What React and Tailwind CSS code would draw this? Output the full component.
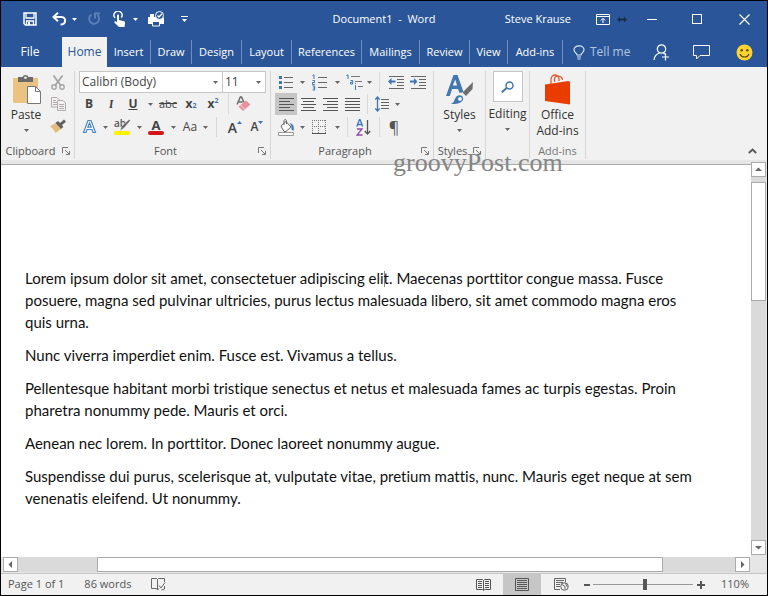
import { useState } from 'react';

const TABS = [
  { label: 'Insert', width: 'w-11' },
  { label: 'Draw', width: 'w-[41px]' },
  { label: 'Design', width: 'w-[50px]' },
  { label: 'Layout', width: 'w-[50px]' },
  { label: 'References', width: 'w-[70px]' },
  { label: 'Mailings', width: 'w-[58px]' },
  { label: 'Review', width: 'w-[50px]' },
  { label: 'View', width: 'w-[38px]' },
  { label: 'Add-ins', width: 'w-[55px]' },
];

const PARAGRAPHS = [
  'Maecenas porttitor congue massa. Fusce posuere, magna sed pulvinar ultricies, purus lectus malesuada libero, sit amet commodo magna eros quis urna.',
  'Nunc viverra imperdiet enim. Fusce est. Vivamus a tellus.',
  'Pellentesque habitant morbi tristique senectus et netus et malesuada fames ac turpis egestas. Proin pharetra nonummy pede. Mauris et orci.',
  'Aenean nec lorem. In porttitor. Donec laoreet nonummy augue.',
  'Suspendisse dui purus, scelerisque at, vulputate vitae, pretium mattis, nunc. Mauris eget neque at sem venenatis eleifend. Ut nonummy.',
];

const Caret = ({ className = 'text-[#666]' }) => (
  <svg width="5" height="3" viewBox="0 0 5 3" className={className} aria-hidden="true">
    <path d="M0 0h5L2.5 3z" fill="currentColor" />
  </svg>
);

const Tool = ({ label, width = 'w-[22px]', active, children }) => (
  <button
    type="button"
    aria-label={label}
    className={`flex h-[22px] shrink-0 items-center justify-center ${width} ${active ? 'bg-[#c6c6c6]' : ''}`}
  >
    {children}
  </button>
);

const Divider = ({ width = 'w-3' }) => (
  <div className={`flex h-5 shrink-0 justify-center ${width}`}>
    <div className="w-px bg-[#d8d8d8]" />
  </div>
);

const Launcher = ({ label }) => (
  <button type="button" aria-label={label} className="flex h-4 w-3 items-center justify-center">
    <svg width="8" height="8" viewBox="0 0 8 8" fill="none" stroke="#777" aria-hidden="true">
      <path d="M.5 6V.5H6M3 3l4 4M7.5 4v3.5H4" />
    </svg>
  </button>
);

const Group = ({ label, launcher, width, muted, children }) => (
  <section
    aria-label={label || 'Editing'}
    className={`mt-1 mb-px flex shrink-0 flex-col border-r border-[#d5d5d5] ${width}`}
  >
    <div className="flex-1">{children}</div>
    <div className={`flex h-4 items-center ${launcher ? 'pr-0.5' : ''} ${muted ? 'text-[#777]' : 'text-[#555]'}`}>
      <span className="flex-1 text-center">{label}</span>
      {launcher && <Launcher label={`${label} settings`} />}
    </div>
  </section>
);

const Lines = ({ rows }) => (
  <svg width="15" height="13" viewBox="0 0 15 13" stroke="#555" aria-hidden="true">
    {rows.map(([x1, x2], i) => (
      <path key={i} d={`M${x1} ${i * 3 + 0.5}H${x2}`} />
    ))}
  </svg>
);

const SaveIcon = () => (
  <svg width="14" height="14" viewBox="0 0 14 14" aria-hidden="true">
    <path d="M1 1h12v12H2.500L1 11.500z" fill="none" stroke="#fff" strokeWidth="1.500" />
    <path d="M3 1v5h8V1M3.500 13V9h7v4" fill="none" stroke="#fff" strokeWidth="1.300" />
    <path d="M5 10h2v3H5z" fill="#fff" />
  </svg>
);

const UndoIcon = () => (
  <svg width="15" height="14" viewBox="0 0 15 14" fill="none" stroke="#fff" strokeWidth="2" aria-hidden="true">
    <path d="M6 .8 1.500 5 6 9.200M2 5h7.500c5 0 5 7.500-1 7.500" />
  </svg>
);

const RedoIcon = () => (
  <svg width="14" height="14" viewBox="0 0 14 14" fill="none" stroke="#5b7fb8" strokeWidth="2" aria-hidden="true">
    <path d="M4.500 2.500A5 5 0 1 0 10.500 3M8 6.500V1.500h5" />
  </svg>
);

const TouchIcon = () => (
  <svg width="13" height="16" viewBox="0 0 13 16" aria-hidden="true">
    <path d="M2.200 7A4 4 0 1 1 8.300 6.500" fill="none" stroke="#fff" strokeWidth="1.400" />
    <path d="M4 4.500c0-1.500 2-1.500 2 0V9l5 1.200c1 .3 1.200 1 1 2L11.500 16H6l-4.500-4.300c-.6-.9.600-1.700 1.300-1.200L4 11.200z" fill="#fff" />
  </svg>
);

const PrintIcon = () => (
  <svg width="17" height="16" viewBox="0 0 17 16" aria-hidden="true">
    <path d="M0 6h2V3h4v3h9l1 1v6H0z" fill="#fff" />
    <path d="M4.500 10.500h7v4.500h-7z" fill="#2a5699" stroke="#fff" />
    <circle cx="11.500" cy="4.500" r="4" fill="#2a5699" stroke="#fff" />
    <path d="m9.500 4.500 1.500 1.500 3-3.200" fill="none" stroke="#fff" strokeWidth="1.300" />
  </svg>
);

const RibbonDisplayIcon = () => (
  <svg width="14" height="11" viewBox="0 0 14 11" fill="none" stroke="#fff" aria-hidden="true">
    <path d="M.5.5h13v10H.5zM.5 2.500h13M7 9V4.500M4.800 6.500 7 4.300l2.200 2.200" />
  </svg>
);

const PasteIcon = () => (
  <svg width="30" height="31" viewBox="0 0 30 31" aria-hidden="true">
    <rect x="0" y="4" width="25" height="25" rx="1" fill="#eac282" />
    <path d="M5 3h4.500a3.200 3.200 0 0 1 6 0H20v5H5z" fill="#6a6a6a" />
    <circle cx="12.500" cy="3.800" r="1.300" fill="#f1f1f1" />
    <path d="M14.500 12.500h8l5 5v12h-13z" fill="#fff" stroke="#777" />
    <path d="M22.500 12.500v5h5" fill="none" stroke="#777" />
  </svg>
);

const ScissorsIcon = () => (
  <svg width="14" height="15" viewBox="0 0 14 15" fill="none" stroke="#a5a5a5" aria-hidden="true">
    <path d="m2.500.5 7 9.500M11.500.5l-7 9.500" strokeWidth="1.800" />
    <circle cx="3" cy="12" r="2.200" strokeWidth="1.400" />
    <circle cx="11" cy="12" r="2.200" strokeWidth="1.400" />
  </svg>
);

const CopyIcon = () => (
  <svg width="15" height="14" viewBox="0 0 15 14" fill="#f1f1f1" stroke="#b5a9b0" aria-hidden="true">
    <path d="M.5.5H6L8.500 3v7H.5zM2 3.500h3M2 5.500h4M2 7.500h4" />
    <path d="M6.500 3.500H12l2.500 2.500v7.500h-8zM8 7.500h5M8 9.500h5M8 11.500h5" />
  </svg>
);

const PainterIcon = () => (
  <svg width="16" height="14" viewBox="0 0 16 14" aria-hidden="true">
    <path d="M0 7.500 5.500 4l5.500 6-5.500 4C4.500 11.500 2.500 9 0 7.500z" fill="#e5bb7c" />
    <path d="m5.500 4 2.500-2 2 2L14 .5l2 2.300L12 6l1.300 2-2.300 2z" fill="#606060" />
  </svg>
);

const EraserIcon = () => (
  <svg width="15" height="16" viewBox="0 0 15 16" aria-hidden="true">
    <path d="M1 8.500 4.300 1h1.200L8 6.500M2.500 6h4" fill="none" stroke="#666" strokeWidth="1.400" />
    <path d="m2.500 10.500 7.500-6 4.500 4-7.500 6.500z" fill="#e8909e" />
    <path d="m4.500 9 4.300 4.300" stroke="#f7d5da" />
  </svg>
);

const HighlightIcon = () => (
  <svg width="17" height="17" viewBox="0 0 17 17" className="overflow-visible" aria-hidden="true">
    <text x="0" y="8" fontSize="10" fontWeight="600" fontFamily="Open Sans, sans-serif" fill="#555">ab</text>
    <path d="m16.500 1.500-6.500 7.500-4 3 1.500-4.500L15 .5z" fill="#666" stroke="#f1f1f1" strokeWidth=".5" />
    <rect y="12" width="16" height="4" rx="1" fill="#fff200" />
  </svg>
);

const BulletsIcon = () => (
  <svg width="14" height="15" viewBox="0 0 14 15" aria-hidden="true">
    <path d="M5 2.500h9M5 7.500h9M5 12.500h9" stroke="#666" />
    <path d="M0 1h3v3H0zM0 6h3v3H0zM0 11h3v3H0z" fill="#3f76b5" />
  </svg>
);

const NumberingIcon = () => (
  <svg width="15" height="17" viewBox="0 0 15 17" aria-hidden="true">
    <path d="M6 3.500h9M6 8.500h9M6 13.500h9" stroke="#666" />
    <g fill="none" stroke="#3f76b5">
      <path d="M.5 1.500 2 .8V5M.5 6.500h2v2h-2v2h2.300M.5 12h2.200v4H.5M1 14h1.500" />
    </g>
  </svg>
);

const MultilevelIcon = () => (
  <svg width="17" height="17" viewBox="0 0 17 17" fill="none" aria-hidden="true">
    <path d="M5 2.500h9M9 7.500h7M12 12.500h5" stroke="#777" />
    <path d="M.5 1.500 2 .8V5M4.500 6.500h2.200V10H4.500V8.300h2M9.500 11v5M9.500 9v1" stroke="#3f76b5" />
  </svg>
);

const IndentIcon = ({ flip }) => (
  <svg width="17" height="14" viewBox="0 0 17 14" aria-hidden="true">
    <path d="M1 1.500h15M9 4.500h7M9 7.500h7M9 10.500h7M1 13.500h15" stroke="#666" />
    <path d={flip ? 'M7.500 6.500 4 3v2.500H0v2h4V10z' : 'M0 6.500 3.500 3v2.500h4v2h-4V10z'} fill="#3f76b5" />
  </svg>
);

const SpacingIcon = () => (
  <svg width="15" height="16" viewBox="0 0 15 16" fill="none" aria-hidden="true">
    <path d="M6 3.500h8M6 6.500h8M6 9.500h8M6 12.500h8" stroke="#666" />
    <path d="M2.500 1v14M.3 3.500 2.500 1l2.200 2.500M.3 12.500 2.500 15l2.200-2.500" stroke="#3f76b5" strokeWidth="1.300" />
  </svg>
);

const ShadingIcon = () => (
  <svg width="17" height="17" viewBox="0 0 17 17" aria-hidden="true">
    <path d="m3 7 5-4.500L13 8l-5 4.500H6z" fill="#fff" stroke="#666" />
    <path d="M6 6V2c0-2 2.500-2 2.500 0v3" fill="none" stroke="#666" />
    <path d="M12 4c3 1 4.500 3 3.500 8l-2-1.500V8z" fill="#3f76b5" />
    <path d="M.5 13.500h15v3H.5z" fill="#fff" stroke="#999" />
  </svg>
);

const BordersIcon = () => (
  <svg width="14" height="14" viewBox="0 0 14 14" aria-hidden="true">
    <path d="M0 .5h14M0 6.500h14M.5 0v14M6.500 0v14M13.500 0v14" stroke="#777" strokeDasharray="1 1" />
    <path d="M0 13.500h14" stroke="#555" />
  </svg>
);

const SortIcon = () => (
  <svg width="15" height="17" viewBox="0 0 15 17" fill="none" aria-hidden="true">
    <path d="M.8 7.500 3.500.5h.5l2.700 7M1.800 5.500h4" stroke="#3f76b5" strokeWidth="1.300" />
    <path d="M1 10h5l-5 6h5.500" stroke="#8a4aa8" strokeWidth="1.300" />
    <path d="M11.500 1v14M8.800 12l2.700 3 2.700-3" stroke="#555" strokeWidth="1.300" />
  </svg>
);

const StylesIcon = () => (
  <svg width="30" height="31" viewBox="0 0 30 31" aria-hidden="true">
    <path d="M1 22 8.500 1h4l6 17-4 1-1.500-4H7l-2.200 7zM7.800 11.500h4.300L10.200 5.500z" fill="#4377b0" fillRule="evenodd" />
    <path d="m28 8-.5 7-6.500 7-3.500-3.500z" fill="#6e6e6e" />
    <path d="M5 30c4 0 4-4 6-7 2-2.500 6-2.500 7 .5 1.500 5-6 7-13 6.500z" fill="#4377b0" />
    <circle cx="15" cy="25" r="2" fill="#f1f1f1" />
  </svg>
);

const SearchIcon = () => (
  <svg width="13" height="12" viewBox="0 0 13 12" fill="none" stroke="#4377b0" aria-hidden="true">
    <circle cx="8.500" cy="4.500" r="3.500" strokeWidth="1.500" />
    <path d="M5.700 7 .8 11.300" strokeWidth="2" />
  </svg>
);

const StoreIcon = () => (
  <svg width="26" height="31" viewBox="0 0 26 31" aria-hidden="true">
    <path d="M6 10V6c0-7 8-6 8-1v2M9.500 8V5c0-4 7.500-4 8 1" fill="none" stroke="#e25a35" strokeWidth="1.300" />
    <path d="M0 10.500 23.500 7l1.500 1v22.500L0 27z" fill="#eb3c00" />
  </svg>
);

const BulbIcon = () => (
  <svg width="12" height="15" viewBox="0 0 12 15" fill="none" stroke="#dbe5f3" strokeWidth="1.200" aria-hidden="true">
    <path d="M4 10C4 8 1 7.500 1 4.800 1 2.500 3.200.8 6 .8s5 1.700 5 4C11 7.500 8 8 8 10zM4 12h4M4.500 14h3" />
  </svg>
);

const ShareIcon = () => (
  <svg width="17" height="17" viewBox="0 0 17 17" fill="none" stroke="#fff" strokeWidth="1.200" aria-hidden="true">
    <circle cx="8.500" cy="5" r="4.200" />
    <path d="M1 16c.3-4 2.500-6 5.500-7M10.500 9l1.500 1M12.500 9.500v7M9 13h7" />
  </svg>
);

const CommentIcon = () => (
  <svg width="17" height="15" viewBox="0 0 17 15" fill="none" stroke="#fff" aria-hidden="true">
    <path d="M.5.5h16v10H7l-3.500 3.500v-3.500h-3z" />
  </svg>
);

const SmileyIcon = () => (
  <svg width="17" height="17" viewBox="0 0 17 17" aria-hidden="true">
    <circle cx="8.500" cy="8.500" r="8" fill="#fdd32f" />
    <circle cx="5.700" cy="6.300" r="1.200" fill="#5b4a14" />
    <circle cx="11.300" cy="6.300" r="1.200" fill="#5b4a14" />
    <path d="M4 10c1.500 4 7.500 4 9 0" fill="none" stroke="#5b4a14" strokeWidth="1.200" />
  </svg>
);

const ProofIcon = () => (
  <svg width="15" height="13" viewBox="0 0 15 13" fill="none" stroke="#666" aria-hidden="true">
    <path d="M6.500 12V1.500L5.500.5h-5v10h5zM6.500 1.500l1-1h6V4M6.500 12l1.500-1.500M8 7.500l2 2.500 4-5.500M10.500 12l3-1V8" />
  </svg>
);

const ReadIcon = () => (
  <svg width="15" height="12" viewBox="0 0 15 12" fill="none" stroke="#555" aria-hidden="true">
    <path d="M7.500 11.500 6.500 10.500h-6V.5h6l1 1 1-1h6v10h-6zM7.500 1v10M2 2.500h4M2 4.500h4M2 6.500h4M2 8.500h4M9 2.500h4M9 4.500h4M9 6.500h4M9 8.500h4" />
  </svg>
);

const PrintLayoutIcon = () => (
  <svg width="14" height="13" viewBox="0 0 14 13" fill="none" stroke="#555" aria-hidden="true">
    <path d="M.5.5h13v12H.5zM2 2.500h10M2 4.500h10M2 6.500h10M2 8.500h10M2 10.500h10" />
  </svg>
);

const WebLayoutIcon = () => (
  <svg width="15" height="13" viewBox="0 0 15 13" fill="none" stroke="#666" aria-hidden="true">
    <path d="M6 11.500H.5V.5h11V4M2 2.500h8M2 4.500h7M2 6.500h4M2 8.500h4" />
    <circle cx="10.500" cy="8.500" r="3.800" />
    <path d="m8 6.500 3 2v3M11 5l2.500 4" />
  </svg>
);

const TitleBar = () => (
  <header className="grid h-9 grid-cols-[1fr_auto_1fr] items-center text-[11px] text-white">
    <div className="flex items-center pl-[22px]">
      <button type="button" aria-label="Save"><SaveIcon /></button>
      <button type="button" aria-label="Undo" className="ml-[15px] flex items-center gap-[5px]">
        <UndoIcon />
        <Caret className="text-white" />
      </button>
      <button type="button" aria-label="Redo" className="ml-2.5"><RedoIcon /></button>
      <button type="button" aria-label="Touch mode" className="ml-3 flex items-center gap-[7px]">
        <TouchIcon />
        <Caret className="text-white" />
      </button>
      <button type="button" aria-label="Print preview" className="ml-2.5"><PrintIcon /></button>
      <button type="button" aria-label="Customize toolbar" className="ml-4 flex flex-col items-center gap-0.5">
        <span className="h-px w-[7px] bg-white" />
        <Caret className="text-white" />
      </button>
    </div>
    <h1 className="whitespace-pre">Document1  -  Word</h1>
    <div className="flex items-center justify-end pr-[3px]">
      <span className="mr-5">Steve Krause</span>
      <button type="button" aria-label="Ribbon display options" className="flex w-6 justify-center">
        <RibbonDisplayIcon />
      </button>
      <svg width="15" height="7" viewBox="0 0 15 7" className="mr-1" aria-hidden="true">
        <path d="M2 3.500 5 .5v2h4v-2l3 3-3 3v-2H5v2z" fill="#1b2b45" />
      </svg>
      <button type="button" aria-label="Minimize" className="flex h-8 w-9 items-center justify-center">
        <span className="h-px w-2.5 bg-white" />
      </button>
      <button type="button" aria-label="Maximize" className="flex h-8 w-[54px] items-center justify-center">
        <span className="h-2.5 w-2.5 border border-white" />
      </button>
      <button type="button" aria-label="Close" className="flex h-8 w-10 items-center justify-center">
        <svg width="11" height="11" viewBox="0 0 11 11" stroke="#fff" strokeWidth="1.200" aria-hidden="true">
          <path d="m.5.5 10 10M10.500.5l-10 10" />
        </svg>
      </button>
    </div>
  </header>
);

const TabBar = () => (
  <nav className="flex h-[30px] items-center text-[12px] text-white">
    <button type="button" className="w-[58px] shrink-0">File</button>
    <button type="button" className="ml-[3px] h-[30px] w-[45px] shrink-0 bg-[#f1f1f1] text-[#2a5699]">Home</button>
    {TABS.map((tab) => (
      <button key={tab.label} type="button" className={`h-6 shrink-0 border-r border-[#6f8fc0] text-[11px] ${tab.width}`}>
        {tab.label}
      </button>
    ))}
    <label className="ml-2.5 flex min-w-0 flex-1 items-center gap-[5px]">
      <BulbIcon />
      <input
        type="text"
        aria-label="Tell me"
        placeholder="Tell me"
        className="w-12 min-w-0 bg-transparent outline-none placeholder:text-[#b4c6e2] placeholder:opacity-100"
      />
    </label>
    <button type="button" aria-label="Share" className="flex w-10 shrink-0 justify-center"><ShareIcon /></button>
    <button type="button" aria-label="Comments" className="flex w-10 shrink-0 justify-center"><CommentIcon /></button>
    <button type="button" aria-label="Feedback" className="flex w-[46px] shrink-0 justify-center"><SmileyIcon /></button>
  </nav>
);

const ClipboardGroup = () => (
  <Group label="Clipboard" launcher width="w-[74px]">
    <div className="flex gap-[3px] pl-[7px]">
      <button type="button" className="flex w-9 flex-col items-center pt-[3px] text-[12px] text-[#333]">
        <span className="pl-1"><PasteIcon /></span>
        <span className="leading-5">Paste</span>
        <span className="pt-1"><Caret /></span>
      </button>
      <div className="flex flex-col items-center">
        <Tool label="Cut"><ScissorsIcon /></Tool>
        <Tool label="Copy"><CopyIcon /></Tool>
        <Tool label="Format Painter"><PainterIcon /></Tool>
      </div>
    </div>
  </Group>
);

const FontGroup = () => {
  const [font, setFont] = useState('Calibri (Body)');
  const [size, setSize] = useState('11');

  return (
    <Group label="Font" launcher width="w-[196px]">
      <div className="flex pl-1 text-[12px] text-[#444]">
        <label className="relative flex h-[22px] w-36 items-center border border-[#c6c6c6] bg-white">
          <select
            aria-label="Font"
            value={font}
            onChange={(e) => setFont(e.target.value)}
            className="h-full w-full appearance-none bg-transparent pl-0.5 outline-none"
          >
            <option>Calibri (Body)</option>
            <option>Cambria</option>
          </select>
          <span className="pointer-events-none absolute right-1 flex"><Caret /></span>
        </label>
        <label className="relative flex h-[22px] w-[43px] items-center border border-l-0 border-[#c6c6c6] bg-white">
          <select
            aria-label="Font size"
            value={size}
            onChange={(e) => setSize(e.target.value)}
            className="h-full w-full appearance-none bg-transparent pl-0.5 outline-none"
          >
            <option>11</option>
            <option>12</option>
          </select>
          <span className="pointer-events-none absolute right-1 flex"><Caret /></span>
        </label>
      </div>
      <div className="flex items-center pl-[3px] text-[12px] text-[#444]">
        <Tool label="Bold"><b>B</b></Tool>
        <Tool label="Italic"><i className="font-serif font-bold">I</i></Tool>
        <Tool label="Underline"><b className="underline">U</b></Tool>
        <Tool label="Underline style" width="w-3"><Caret /></Tool>
        <Tool label="Strikethrough" width="w-6"><s className="text-[11px]">abc</s></Tool>
        <Tool label="Subscript"><b>x</b><sub className="text-[7px] font-bold text-[#3f76b5]">2</sub></Tool>
        <Tool label="Superscript"><b>x</b><sup className="text-[7px] font-bold text-[#3f76b5]">2</sup></Tool>
        <Divider width="w-2" />
        <Tool label="Clear formatting"><EraserIcon /></Tool>
      </div>
      <div className="flex items-center pl-[3px] pt-px text-[12px] text-[#444]">
        <Tool label="Text effects">
          <svg width="15" height="16" viewBox="0 0 15 16" aria-hidden="true">
            <path d="m1.500 13.500 4.500-12h3l4.500 12H11l-1-3H5l-1 3zM5.800 8.200h3.400L7.500 3.800z" fill="#fff" stroke="#4a86c5" strokeWidth="1.200" />
          </svg>
        </Tool>
        <Tool label="Text effects menu" width="w-2.5"><Caret /></Tool>
        <Tool label="Highlight" width="w-6"><HighlightIcon /></Tool>
        <Tool label="Highlight color" width="w-2.5"><Caret /></Tool>
        <Tool label="Font color" width="w-6">
          <span className="flex flex-col items-center">
            <b className="text-[13px] leading-3">A</b>
            <span className="h-1 w-4 rounded-sm bg-[#d01818]" />
          </span>
        </Tool>
        <Tool label="Font color menu" width="w-2.5"><Caret /></Tool>
        <Tool label="Change case" width="w-6">Aa</Tool>
        <Tool label="Change case menu" width="w-1.5"><Caret /></Tool>
        <Divider width="w-4" />
        <Tool label="Grow font">
          <span className="text-[14px] font-semibold">A</span>
          <svg width="5" height="12" viewBox="0 0 5 12" aria-hidden="true"><path d="M0 3h5L2.500 0z" fill="#3f76b5" /></svg>
        </Tool>
        <Tool label="Shrink font">
          <span className="font-semibold">A</span>
          <svg width="5" height="12" viewBox="0 0 5 12" aria-hidden="true"><path d="M0 0h5L2.500 3z" fill="#3f76b5" /></svg>
        </Tool>
      </div>
    </Group>
  );
};

const ParagraphGroup = () => (
  <Group label="Paragraph" launcher width="w-[163px]">
    <div className="flex items-center pl-1">
      <Tool label="Bullets"><BulletsIcon /></Tool>
      <Tool label="Bullet library" width="w-2.5"><Caret /></Tool>
      <Tool label="Numbering" width="w-6"><NumberingIcon /></Tool>
      <Tool label="Numbering library" width="w-3"><Caret /></Tool>
      <Tool label="Multilevel list"><MultilevelIcon /></Tool>
      <Tool label="List library" width="w-2"><Caret /></Tool>
      <Divider />
      <Tool label="Decrease indent"><IndentIcon /></Tool>
      <Tool label="Increase indent"><IndentIcon flip /></Tool>
    </div>
    <div className="flex items-center pl-1">
      <Tool label="Align left" active><Lines rows={[[0, 15], [0, 11], [0, 15], [0, 11], [0, 15]]} /></Tool>
      <Tool label="Center"><Lines rows={[[0, 15], [2, 13], [0, 15], [2, 13], [0, 15]]} /></Tool>
      <Tool label="Align right"><Lines rows={[[0, 15], [4, 15], [0, 15], [4, 15], [0, 15]]} /></Tool>
      <Tool label="Justify"><Lines rows={[[0, 15], [0, 15], [0, 15], [0, 15], [0, 15]]} /></Tool>
      <Divider width="w-2" />
      <Tool label="Line spacing"><SpacingIcon /></Tool>
      <Tool label="Line spacing menu" width="w-2"><Caret /></Tool>
    </div>
    <div className="flex items-center pl-1 pt-px">
      <Tool label="Shading"><ShadingIcon /></Tool>
      <Tool label="Shading color" width="w-2.5"><Caret /></Tool>
      <Tool label="Borders" width="w-6"><BordersIcon /></Tool>
      <Tool label="Border style" width="w-3"><Caret /></Tool>
      <Divider width="w-2" />
      <Tool label="Sort" width="w-6"><SortIcon /></Tool>
      <Divider width="w-2" />
      <Tool label="Show marks"><span className="text-[16px] text-[#555]">¶</span></Tool>
    </div>
  </Group>
);

const Ribbon = () => (
  <div className="flex h-[93px] bg-[#f1f1f1] text-[11px]">
    <ClipboardGroup />
    <FontGroup />
    <ParagraphGroup />
    <Group label="Styles" launcher width="w-[52px]">
      <button type="button" className="flex w-full flex-col items-center pt-[3px] text-[12px] text-[#333]">
        <StylesIcon />
        <span className="leading-5">Styles</span>
        <span className="pt-1"><Caret /></span>
      </button>
    </Group>
    <Group width="w-11">
      <button type="button" className="flex w-full flex-col items-center text-[12px] text-[#333]">
        <span className="flex h-[31px] w-[30px] items-center justify-center border border-[#c6c6c6] bg-white">
          <SearchIcon />
        </span>
        <span className="pt-0.5 leading-5">Editing</span>
        <span className="pt-1"><Caret /></span>
      </button>
    </Group>
    <Group label="Add-ins" muted width="w-14">
      <button type="button" className="flex w-full flex-col items-center pt-[3px] text-[12px] leading-4 text-[#333]">
        <StoreIcon />
        <span className="pt-0.5">Office</span>
        <span>Add-ins</span>
      </button>
    </Group>
    <div className="flex flex-1 items-end justify-end p-1 pr-2.5">
      <button type="button" aria-label="Collapse ribbon">
        <svg width="9" height="9" viewBox="0 0 9 9" fill="none" stroke="#555" strokeWidth="1.800" aria-hidden="true">
          <path d="m.8 6 3.700-3.500L8.200 6" />
        </svg>
      </button>
    </div>
  </div>
);

const ScrollButton = ({ label, path }) => (
  <button
    type="button"
    aria-label={label}
    className="flex h-[15px] w-[15px] shrink-0 items-center justify-center border border-[#ababab] bg-white"
  >
    <svg width="7" height="7" viewBox="0 0 7 7" aria-hidden="true"><path d={path} fill="#666" /></svg>
  </button>
);

const TextCursor = () => <span className="-mr-px inline-block h-4 w-px bg-[#888] align-text-bottom" />;

const Document = () => (
  <div className="flex flex-1 bg-[#e6e6e6]">
    <main className="mt-1 flex-1 border-t border-[#ababab] bg-white pr-11 pl-6 pt-[102px] font-['Lato',sans-serif] text-[15px] leading-[22px] text-[#111] [font-variant-ligatures:none]">
      <div className="flex flex-col gap-[11px]">
        {PARAGRAPHS.map((text, i) => (
          <p key={text}>
            {i === 0 && <>Lorem ipsum dolor sit amet, consectetuer adipiscing eli<TextCursor />t. </>}
            {text}
          </p>
        ))}
      </div>
    </main>
    <div className="mr-px flex w-[15px] flex-col pt-0.5 pb-0.5">
      <ScrollButton label="Scroll up" path="M0 5h7L3.500 1.500z" />
      <div className="flex-1 bg-[#dadada] pt-[5px]">
        <div className="h-[119px] border border-[#ababab] bg-white" />
      </div>
      <ScrollButton label="Scroll down" path="M0 2h7L3.500 5.500z" />
    </div>
  </div>
);

const StatusBar = () => {
  const [zoom, setZoom] = useState(110);

  return (
    <footer className="flex h-[22px] items-center border-t border-[#c6c6c6] bg-[#f1f1f1] text-[11px] text-[#555]">
      <span className="pl-[7px]">Page 1 of 1</span>
      <span className="pl-5">86 words</span>
      <button type="button" aria-label="Proofing" className="ml-5"><ProofIcon /></button>
      <div className="flex-1" />
      <button type="button" aria-label="Read mode" className="flex w-10 justify-center"><ReadIcon /></button>
      <button type="button" aria-label="Print layout" className="flex h-full w-[38px] items-center justify-center bg-[#c6c6c6]">
        <PrintLayoutIcon />
      </button>
      <button type="button" aria-label="Web layout" className="flex w-10 justify-center"><WebLayoutIcon /></button>
      <button type="button" aria-label="Zoom out" className="flex w-3 justify-center">
        <span className="h-0.5 w-1.5 bg-[#555]" />
      </button>
      <input
        type="range"
        aria-label="Zoom"
        min="10"
        max="202"
        value={zoom}
        onChange={(e) => setZoom(Number(e.target.value))}
        className="h-3 w-[100px] appearance-none bg-transparent [&::-webkit-slider-runnable-track]:h-px [&::-webkit-slider-runnable-track]:bg-[#999] [&::-webkit-slider-thumb]:-mt-[5px] [&::-webkit-slider-thumb]:h-[11px] [&::-webkit-slider-thumb]:w-1 [&::-webkit-slider-thumb]:appearance-none [&::-webkit-slider-thumb]:bg-[#555]"
      />
      <button type="button" aria-label="Zoom in" className="flex w-4 justify-center">
        <svg width="8" height="8" viewBox="0 0 8 8" stroke="#555" strokeWidth="2" aria-hidden="true">
          <path d="M0 4h8M4 0v8" />
        </svg>
      </button>
      <span className="w-[58px] pl-3">{zoom}%</span>
    </footer>
  );
};

const App = () => (
  <div className="relative flex min-h-screen flex-col border border-black bg-[#2a5699] font-['Open_Sans',sans-serif]">
    <TitleBar />
    <TabBar />
    <div className="relative">
      <Ribbon />
      <div className="absolute top-20 left-[392px] font-['Liberation_Serif',serif] text-[26px] leading-8 text-[#858585]">
        groovyPost.com
      </div>
    </div>
    <Document />
    <div className="flex bg-[#e6e6e6] pr-[17px] pb-px pl-0.5">
      <ScrollButton label="Scroll left" path="M5 0v7L1.500 3.500z" />
      <div className="flex flex-1 bg-[#dadada] pr-[72px] pl-[79px]">
        <div className="flex-1 border border-[#ababab] bg-white" />
      </div>
      <ScrollButton label="Scroll right" path="M2 0v7l3.500-3.500z" />
    </div>
    <StatusBar />
  </div>
);

export default App;
